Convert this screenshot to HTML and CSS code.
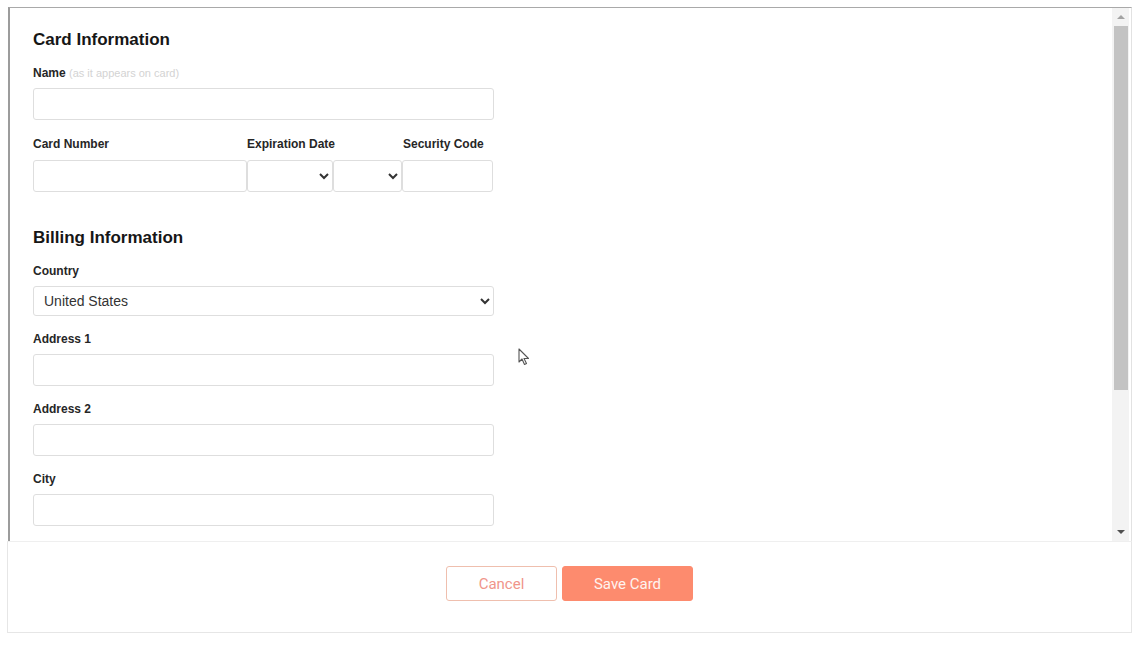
FILE: index.html
```html
<!DOCTYPE html>
<html lang="en">
<head>
<meta charset="utf-8">
<title>Card Information</title>
<link rel="stylesheet" href="styles.css">
</head>
<body>
<div class="dialog">
  <div class="pane">
    <div class="pane-content">
      <form class="form">
        <h2 class="heading">Card Information</h2>
        <div class="group">
          <label class="label">Name <span class="hint">(as it appears on card)</span></label>
          <input class="input" type="text">
        </div>
        <div class="card-row">
          <label class="label c1">Card Number</label>
          <label class="label c2">Expiration Date</label>
          <label class="label c3">Security Code</label>
          <input class="input" type="text">
          <select class="select"><option></option></select>
          <select class="select"><option></option></select>
          <input class="input" type="text">
        </div>

        <h2 class="heading billing">Billing Information</h2>
        <div class="group">
          <label class="label">Country</label>
          <select class="select country"><option>United States</option></select>
        </div>
        <div class="group">
          <label class="label">Address 1</label>
          <input class="input" type="text">
        </div>
        <div class="group">
          <label class="label">Address 2</label>
          <input class="input" type="text">
        </div>
        <div class="group">
          <label class="label">City</label>
          <input class="input" type="text">
        </div>
      </form>
    </div>
    <div class="scrollbar" aria-hidden="true">
      <div class="sb-btn">
        <svg width="8" height="5" viewBox="0 0 8 5"><path d="M0 5L4 1L8 5Z" fill="#a3a3a3"/></svg>
      </div>
      <div class="sb-track">
        <div class="sb-thumb"></div>
      </div>
      <div class="sb-btn">
        <svg width="8" height="5" viewBox="0 0 8 5"><path d="M0 0L4 4L8 0Z" fill="#505050"/></svg>
      </div>
    </div>
  </div>
  <div class="footer">
    <button class="btn btn-cancel" type="button">Cancel</button>
    <button class="btn btn-save" type="button">Save Card</button>
  </div>
</div>
<svg class="cursor" width="12" height="18" viewBox="0 0 12 18" aria-hidden="true">
  <path d="M1 1 L1 14 L4 11 L6.5 16.5 L8.5 15.5 L6 10.5 L10.5 10.5 Z" fill="#fff" stroke="#555" stroke-width="1.1" stroke-linejoin="round"/>
</svg>
</body>
</html>
```

FILE: styles.css
```css
html, body {
  margin: 0;
  padding: 0;
  background: #fff;
}

body {
  font-family: "Liberation Sans", Arial, sans-serif;
  color: #222;
  position: relative;
  height: 647px;
  overflow: hidden;
}

.dialog {
  margin: 7px 0 0 7px;
  width: 1125px;
}

.pane {
  margin-left: 1px;
  height: 533px;
  border-top: 1px solid #a9a9a9;
  border-left: 2px solid #9c9c9c;
  border-right: 1px solid #e2e2e2;
  background: #fff;
  display: flex;
}

.pane-content {
  flex: 1;
  overflow: hidden;
}

.scrollbar {
  width: 17px;
  margin-right: 2px;
  background: #f3f3f3;
  display: flex;
  flex-direction: column;
}

.sb-btn {
  height: 17px;
  display: flex;
  align-items: center;
  justify-content: center;
}

.sb-track {
  flex: 1;
  padding: 1px 1px 0 2px;
}

.sb-thumb {
  height: 364px;
  background: #c3c3c3;
}

.form {
  width: 461px;
  padding: 22px 0 0 23px;
  margin: 0;
}

.heading {
  margin: 0 0 16px;
  font-size: 17px;
  line-height: 20px;
  font-weight: bold;
  color: #161616;
}

.heading.billing {
  margin-top: 36px;
}

.group {
  display: flex;
  flex-direction: column;
  margin-bottom: 16px;
}

.label {
  display: block;
  font-size: 12px;
  line-height: 14px;
  font-weight: bold;
  color: #262626;
  margin-bottom: 8px;
}

.hint {
  font-size: 11px;
  font-weight: normal;
  color: #d3d3d3;
}

.input,
.select {
  box-sizing: border-box;
  height: 32px;
  margin: 0;
  border: 1px solid #dedede;
  border-radius: 3px;
  background: #fff;
  font-family: "Liberation Sans", Arial, sans-serif;
  font-size: 14px;
  color: #333;
  outline: none;
}

.input {
  padding: 0 10px;
  width: 100%;
}

.select {
  padding: 0 6px;
}

.select.country {
  width: 100%;
  height: 30px;
}

.card-row {
  display: grid;
  grid-template-columns: 214px 86px 69px 91px;
  grid-template-rows: auto 32px;
  padding-top: 1px;
}

.card-row .c1 { grid-column: 1; }
.card-row .c2 { grid-column: 2 / span 2; }
.card-row .c3 { grid-column: 4; padding-left: 1px; }

.card-row .label {
  margin-bottom: 9px;
}

.card-row .select {
  width: 100%;
}

.footer {
  box-sizing: border-box;
  height: 92px;
  border: 1px solid #e6e6e6;
  border-top-color: #efefef;
  display: flex;
  justify-content: center;
  align-items: flex-start;
  gap: 5px;
  padding-top: 24px;
}

.btn {
  height: 35px;
  box-sizing: border-box;
  border-radius: 3px;
  font-family: Roboto, "Liberation Sans", Arial, sans-serif;
  font-size: 15px;
  cursor: pointer;
}

.btn-cancel {
  width: 111px;
  background: #fff;
  border: 1px solid #efbfae;
  color: #f0958a;
}

.btn-save {
  width: 131px;
  background: #fd8b6e;
  border: 1px solid #fd8b6e;
  color: #fff3ef;
}

.cursor {
  position: absolute;
  left: 518px;
  top: 348px;
}
```
